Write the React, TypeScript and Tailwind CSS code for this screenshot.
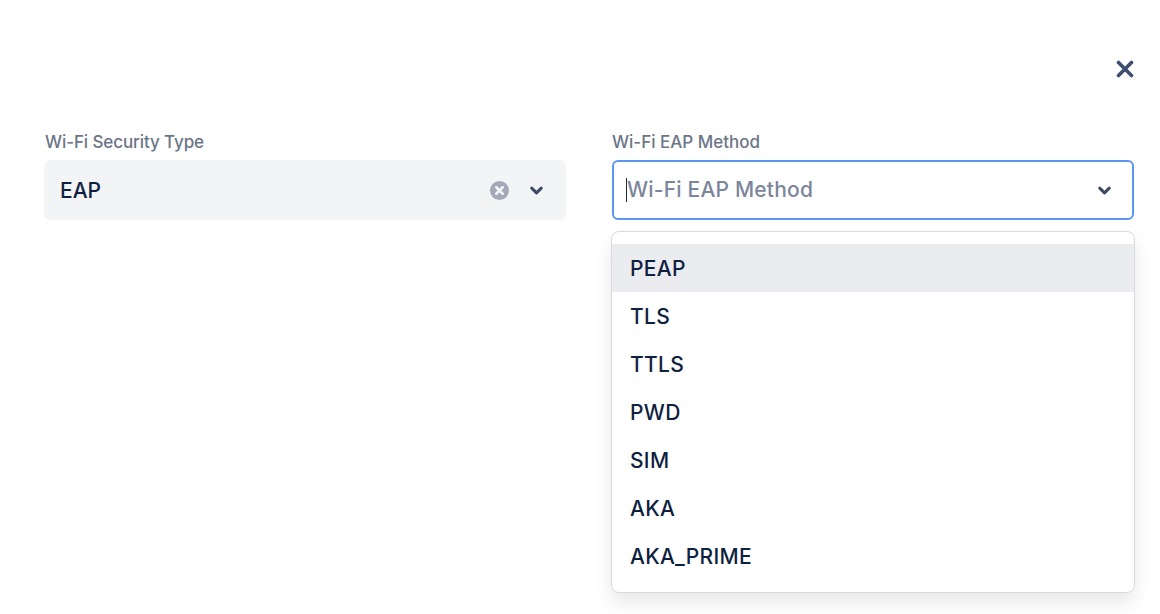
import { ChevronDown } from 'lucide-react';

const methods = ['PEAP', 'TLS', 'TTLS', 'PWD', 'SIM', 'AKA', 'AKA_PRIME'];

function Chevron() {
  return <ChevronDown className="w-[19px] h-[19px] text-[#3d4a66]" strokeWidth={3.8} />;
}

export default function App() {
  return (
    <div className="w-[1160px] h-[614px] overflow-hidden bg-white font-['Inter',sans-serif] pl-[26px] pr-[23px] pt-[57px]">
      <div className="flex justify-end">
        <button className="w-6 h-6 flex items-center justify-center text-[#3d4f6e]">
          <svg width="18" height="18" viewBox="0 0 18 18" fill="none" stroke="currentColor" strokeWidth="3.6" strokeLinecap="round">
            <path d="M2.5 2.5L15.5 15.5M15.5 2.5L2.5 15.5" />
          </svg>
        </button>
      </div>

      <div className="grid grid-cols-[522px_522px] gap-[46px] mt-[49px] pl-[18px]">
        <div>
          <label className="block text-[17px] leading-6 font-medium tracking-[-0.1px] text-[#6b7588] mb-[6px] pl-px">Wi-Fi Security Type</label>
          <div className="h-[60px] rounded-md bg-[#f3f4f6] pl-4 pr-[20px] flex items-center justify-between">
            <span className="text-[21px] font-medium pt-0.5 text-[#0f1f40]">EAP</span>
            <div className="flex items-center gap-[18px]">
              <svg width="19" height="19" viewBox="0 0 18 18">
                <circle cx="9" cy="9" r="9" fill="#a3a9b8" />
                <path d="M6 6L12 12M12 6L6 12" stroke="#f3f4f6" strokeWidth="2.6" strokeLinecap="round" />
              </svg>
              <Chevron />
            </div>
          </div>
        </div>

        <div className="relative">
          <label className="block text-[17px] leading-6 font-medium text-[#6b7588] mb-[6px]">Wi-Fi EAP Method</label>
          <div className="h-[60px] rounded-md border-2 border-[#5a96f2] bg-white pl-[12px] pr-[18px] flex items-center justify-between">
            <div className="flex items-center">
              <span className="w-px h-[24px] bg-[#1f2937]" />
              <span className="text-[21px] font-medium tracking-[0.2px] text-[#7c869b]">Wi-Fi EAP Method</span>
            </div>
            <Chevron />
          </div>
          <ul className="absolute -left-px -right-px top-[101px] rounded-lg border border-[#d8dade] bg-white py-3 shadow-[0_10px_18px_rgba(0,0,0,0.09)]">
            {methods.map((m, i) => (
              <li
                key={m}
                className={`h-12 px-[18px] pt-0.5 flex items-center text-[21px] font-medium tracking-[0.3px] text-[#0f1f40] ${i === 0 ? 'bg-[#ebecf0]' : ''}`}
              >
                {m}
              </li>
            ))}
          </ul>
        </div>
      </div>
    </div>
  );
}
